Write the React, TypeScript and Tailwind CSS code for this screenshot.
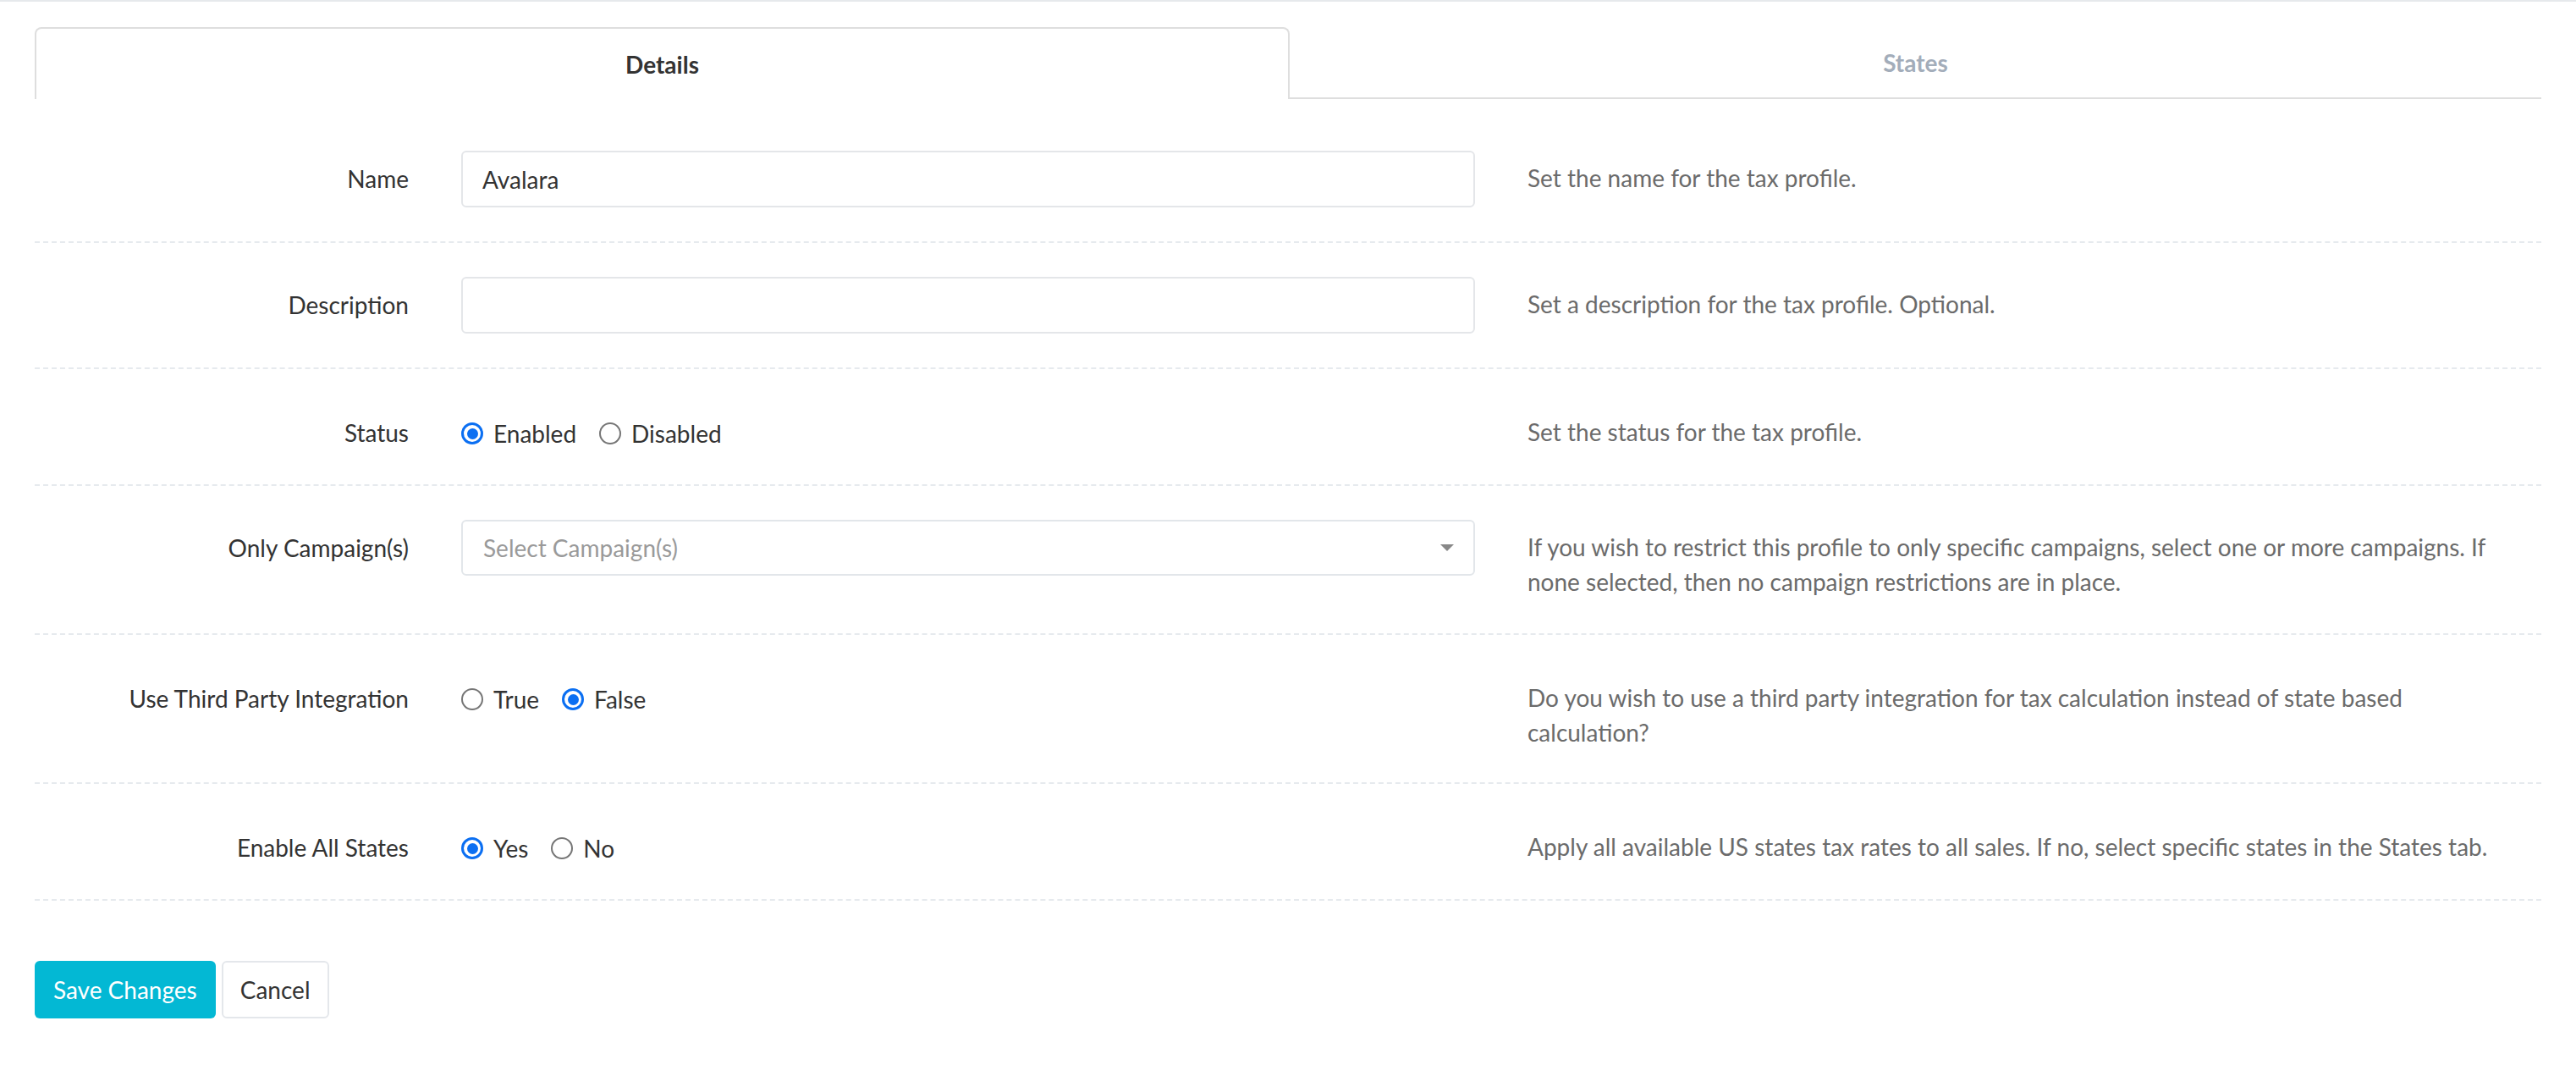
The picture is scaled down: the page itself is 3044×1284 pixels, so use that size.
import React, { useState } from "react";

type Option = { value: string; label: string };

function Radio({ checked }: { checked: boolean }) {
  return checked ? (
    <span className="flex h-[26px] w-[26px] shrink-0 items-center justify-center rounded-full border-[3px] border-[#0b6ff2] bg-white">
      <span className="h-[13px] w-[13px] rounded-full bg-[#0b6ff2]" />
    </span>
  ) : (
    <span className="h-[26px] w-[26px] shrink-0 rounded-full border-2 border-[#767676] bg-white" />
  );
}

function RadioGroup({
  options,
  value,
  onChange,
}: {
  options: Option[];
  value: string;
  onChange: (v: string) => void;
}) {
  return (
    <div className="mt-[12px] flex h-[44px] items-center gap-[27px]">
      {options.map((o) => (
        <label
          key={o.value}
          className="flex cursor-pointer items-center gap-[12px] text-[#333]"
          onClick={() => onChange(o.value)}
        >
          <Radio checked={value === o.value} />
          <span>{o.label}</span>
        </label>
      ))}
    </div>
  );
}

function Row({
  label,
  help,
  children,
  shifted = false,
}: {
  label: string;
  help: React.ReactNode;
  children: React.ReactNode;
  shifted?: boolean;
}) {
  return (
    <div
      className={
        shifted
          ? "grid grid-cols-[442px_1198px_1fr] gap-x-[62px] border-b-2 border-dashed border-[#e6eaee] pt-[42px] pb-[38px]"
          : "grid grid-cols-[442px_1198px_1fr] gap-x-[62px] border-b-2 border-dashed border-[#e6eaee] py-[40px]"
      }
    >
      <div className="pt-[12px] text-right leading-[42px] text-[#333]">{label}</div>
      <div>{children}</div>
      <div className="pt-[12px] leading-[41px] text-[#6b6b6b]">{help}</div>
    </div>
  );
}

export default function App() {
  const [tab, setTab] = useState<"details" | "states">("details");
  const [name, setName] = useState("Avalara");
  const [description, setDescription] = useState("");
  const [status, setStatus] = useState("enabled");
  const [thirdParty, setThirdParty] = useState("false");
  const [allStates, setAllStates] = useState("yes");

  return (
    <div className="min-h-screen bg-white font-['Lato',sans-serif] text-[28px] text-[#333]">
      <div className="h-[2px] bg-[#e6e9ec]" />
      <div className="px-[41px] pt-[30px]">
        {/* Tabs */}
        <div className="flex h-[85px]">
          <button
            type="button"
            onClick={() => setTab("details")}
            className="w-[1483px] rounded-t-[8px] border-2 border-b-0 border-[#dedede] font-bold text-[#333]"
          >
            Details
          </button>
          <button
            type="button"
            onClick={() => setTab("states")}
            className="flex-1 border-b-2 border-[#dedede] font-bold text-[#a3adba]"
          >
            States
          </button>
        </div>

        {tab === "details" && (
          <div className="pt-[21px]">
            <Row label="Name" help="Set the name for the tax profile.">
              <input
                value={name}
                onChange={(e) => setName(e.target.value)}
                className="h-[67px] w-full rounded-[6px] border-2 border-[#e4e6e9] px-[23px] text-[#333] outline-none"
              />
            </Row>
            <Row label="Description" help="Set a description for the tax profile. Optional.">
              <input
                value={description}
                onChange={(e) => setDescription(e.target.value)}
                className="h-[67px] w-full rounded-[6px] border-2 border-[#e4e6e9] px-[23px] text-[#333] outline-none"
              />
            </Row>
            <Row shifted label="Status" help="Set the status for the tax profile.">
              <RadioGroup
                value={status}
                onChange={setStatus}
                options={[
                  { value: "enabled", label: "Enabled" },
                  { value: "disabled", label: "Disabled" },
                ]}
              />
            </Row>
            <Row
              label="Only Campaign(s)"
              help={
                <>
                  If you wish to restrict this profile to only specific campaigns, select one or more campaigns. If
                  <br />
                  none selected, then no campaign restrictions are in place.
                </>
              }
            >
              <div className="flex h-[66px] w-full items-center justify-between rounded-[6px] border-2 border-[#e2e6ea] pl-[24px] pr-[23px]">
                <span className="text-[#9a9a9a]">Select Campaign(s)</span>
                <svg width="16" height="8" viewBox="0 0 16 8">
                  <path d="M0 0h16L8 8z" fill="#888" />
                </svg>
              </div>
            </Row>
            <Row
              shifted
              label="Use Third Party Integration"
              help={
                <>
                  Do you wish to use a third party integration for tax calculation instead of state based
                  <br />
                  calculation?
                </>
              }
            >
              <RadioGroup
                value={thirdParty}
                onChange={setThirdParty}
                options={[
                  { value: "true", label: "True" },
                  { value: "false", label: "False" },
                ]}
              />
            </Row>
            <Row
              shifted
              label="Enable All States"
              help="Apply all available US states tax rates to all sales. If no, select specific states in the States tab."
            >
              <RadioGroup
                value={allStates}
                onChange={setAllStates}
                options={[
                  { value: "yes", label: "Yes" },
                  { value: "no", label: "No" },
                ]}
              />
            </Row>

            <div className="mt-[71px] flex gap-[7px]">
              <button
                type="button"
                className="h-[68px] rounded-[6px] bg-[#03b8d4] px-[22px] text-white"
              >
                Save Changes
              </button>
              <button
                type="button"
                className="h-[68px] rounded-[6px] border-2 border-[#e4e7eb] bg-white px-[20px] text-[#333]"
              >
                Cancel
              </button>
            </div>
          </div>
        )}
      </div>
    </div>
  );
}
